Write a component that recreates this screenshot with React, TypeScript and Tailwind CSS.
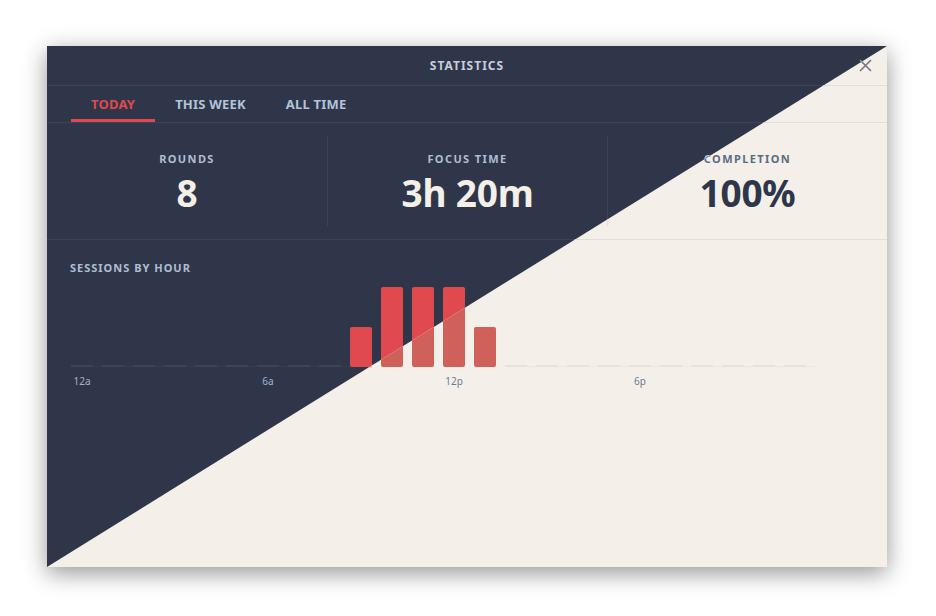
import React from 'react';

type Theme = {
  bg: string;
  line: string;
  title: string;
  tab: string;
  label: string;
  value: string;
  bar: string;
  empty: string;
  base: string;
  hour: string;
  close: string;
};

const dark: Theme = {
  bg: 'bg-[#2f364a]',
  line: 'border-[#3b4357]',
  title: 'text-[#c6cfdc]',
  tab: 'text-[#b3c3d8]',
  label: 'text-[#b0bed2]',
  value: 'text-[#f4efe7]',
  bar: 'bg-[#e0494d]',
  empty: 'bg-[#3c4457]',
  base: 'bg-[#363d50]',
  hour: 'text-[#a6b3c6]',
  close: 'text-[#8a92a3]',
};

const light: Theme = {
  bg: 'bg-[#f4f0e9]',
  line: 'border-[#e3ded6]',
  title: 'text-[#4f5d72]',
  tab: 'text-[#5d6e85]',
  label: 'text-[#5b6b82]',
  value: 'text-[#2e3649]',
  bar: 'bg-[#d0605a]',
  empty: 'bg-[#e7e2da]',
  base: 'bg-[#ece7df]',
  hour: 'text-[#6f7b8c]',
  close: 'text-[#6f737d]',
};

// rounds per hour, 0..23
const sessions = [0, 0, 0, 0, 0, 0, 0, 0, 0, 1, 2, 2, 2, 1, 0, 0, 0, 0, 0, 0, 0, 0, 0, 0];
const hourLabels: Record<number, string> = { 0: '12a', 6: '6a', 12: '12p', 18: '6p' };

const stats = [
  { label: 'Rounds', value: '8' },
  { label: 'Focus Time', value: '3h 20m' },
  { label: 'Completion', value: '100%' },
];

const tabs = ['Today', 'This Week', 'All Time'];

const Panel = ({ t }: { t: Theme }) => (
  <div className={`flex h-full w-full flex-col ${t.bg}`}>
    {/* Header */}
    <div className={`flex h-[40px] items-center border-b ${t.line}`}>
      <div className="w-11" />
      <div className={`flex-1 text-center text-[12px] font-bold uppercase tracking-[1px] ${t.title}`}>
        Statistics
      </div>
      <div className={`flex w-11 items-center justify-center ${t.close}`}>
        <svg width="13" height="13" viewBox="0 0 13 13" fill="none" stroke="currentColor" strokeWidth="1.5">
          <path d="M1 1l11 11M12 1L1 12" />
        </svg>
      </div>
    </div>

    {/* Tabs */}
    <div className={`flex h-[37px] items-stretch border-b px-6 ${t.line}`}>
      {tabs.map((tab, i) => (
        <div
          key={tab}
          className={`flex items-center border-b-[3px] px-5 pt-[4px] text-[13px] font-bold uppercase tracking-[0.2px] ${
            i === 0 ? 'border-[#e0494d] text-[#e0494d]' : `border-transparent ${t.tab}`
          }`}
        >
          {tab}
        </div>
      ))}
    </div>

    {/* Summary */}
    <div className={`grid grid-cols-3 border-b py-[13px] ${t.line}`}>
      {stats.map((s, i) => (
        <div
          key={s.label}
          className={`flex h-[90px] flex-col items-center justify-center gap-[6px] pt-[2px] ${i > 0 ? `border-l ${t.line}` : ''}`}
        >
          <div className={`text-[11px] leading-4 font-bold uppercase tracking-[1.4px] ${t.label}`}>{s.label}</div>
          <div className={`text-[37px] leading-10 font-bold tracking-[-0.2px] ${t.value}`}>{s.value}</div>
        </div>
      ))}
    </div>

    {/* Chart */}
    <div className="px-6 pt-5">
      <div className={`-ml-px text-[11px] leading-4 font-bold uppercase tracking-[1px] ${t.label}`}>Sessions by hour</div>
      <div className="mt-[10px] flex h-[81px] items-end">
        {sessions.map((n, h) => (
          <div key={h} className={`w-[31px] pr-[9px] ${n === 0 ? t.base : ''}`} style={n === 0 ? { height: 1 } : undefined}>
            {n > 0 ? (
              <div className={`w-[22px] rounded-[2px] ${t.bar}`} style={{ height: n * 40 }} />
            ) : (
              <div className={`-mt-[1px] h-[2px] w-[22px] ${t.empty}`} />
            )}
          </div>
        ))}
      </div>
      <div className="mt-[7px] flex">
        {sessions.map((_, h) => (
          <div key={h} className="flex w-[31px] justify-center pr-[9px]">
            <span className={`whitespace-nowrap text-[10px] leading-[14px] ${t.hour}`}>{hourLabels[h] ?? ''}</span>
          </div>
        ))}
      </div>
    </div>
  </div>
);

const App = () => {
  return (
    <div
      className="h-[616px] w-[936px] bg-white pl-[47px] pt-[46px]"
      style={{ fontFamily: '"Noto Sans", "Open Sans", sans-serif' }}
    >
      <div className="relative h-[521px] w-[840px] overflow-hidden shadow-[0_6px_22px_rgba(0,0,0,0.42)]">
        <Panel t={dark} />
        {/* light theme half, cut on the diagonal */}
        <div className="absolute inset-0 [clip-path:polygon(100%_0,100%_100%,0_100%)]">
          <Panel t={light} />
        </div>
      </div>
    </div>
  );
};

export default App;
